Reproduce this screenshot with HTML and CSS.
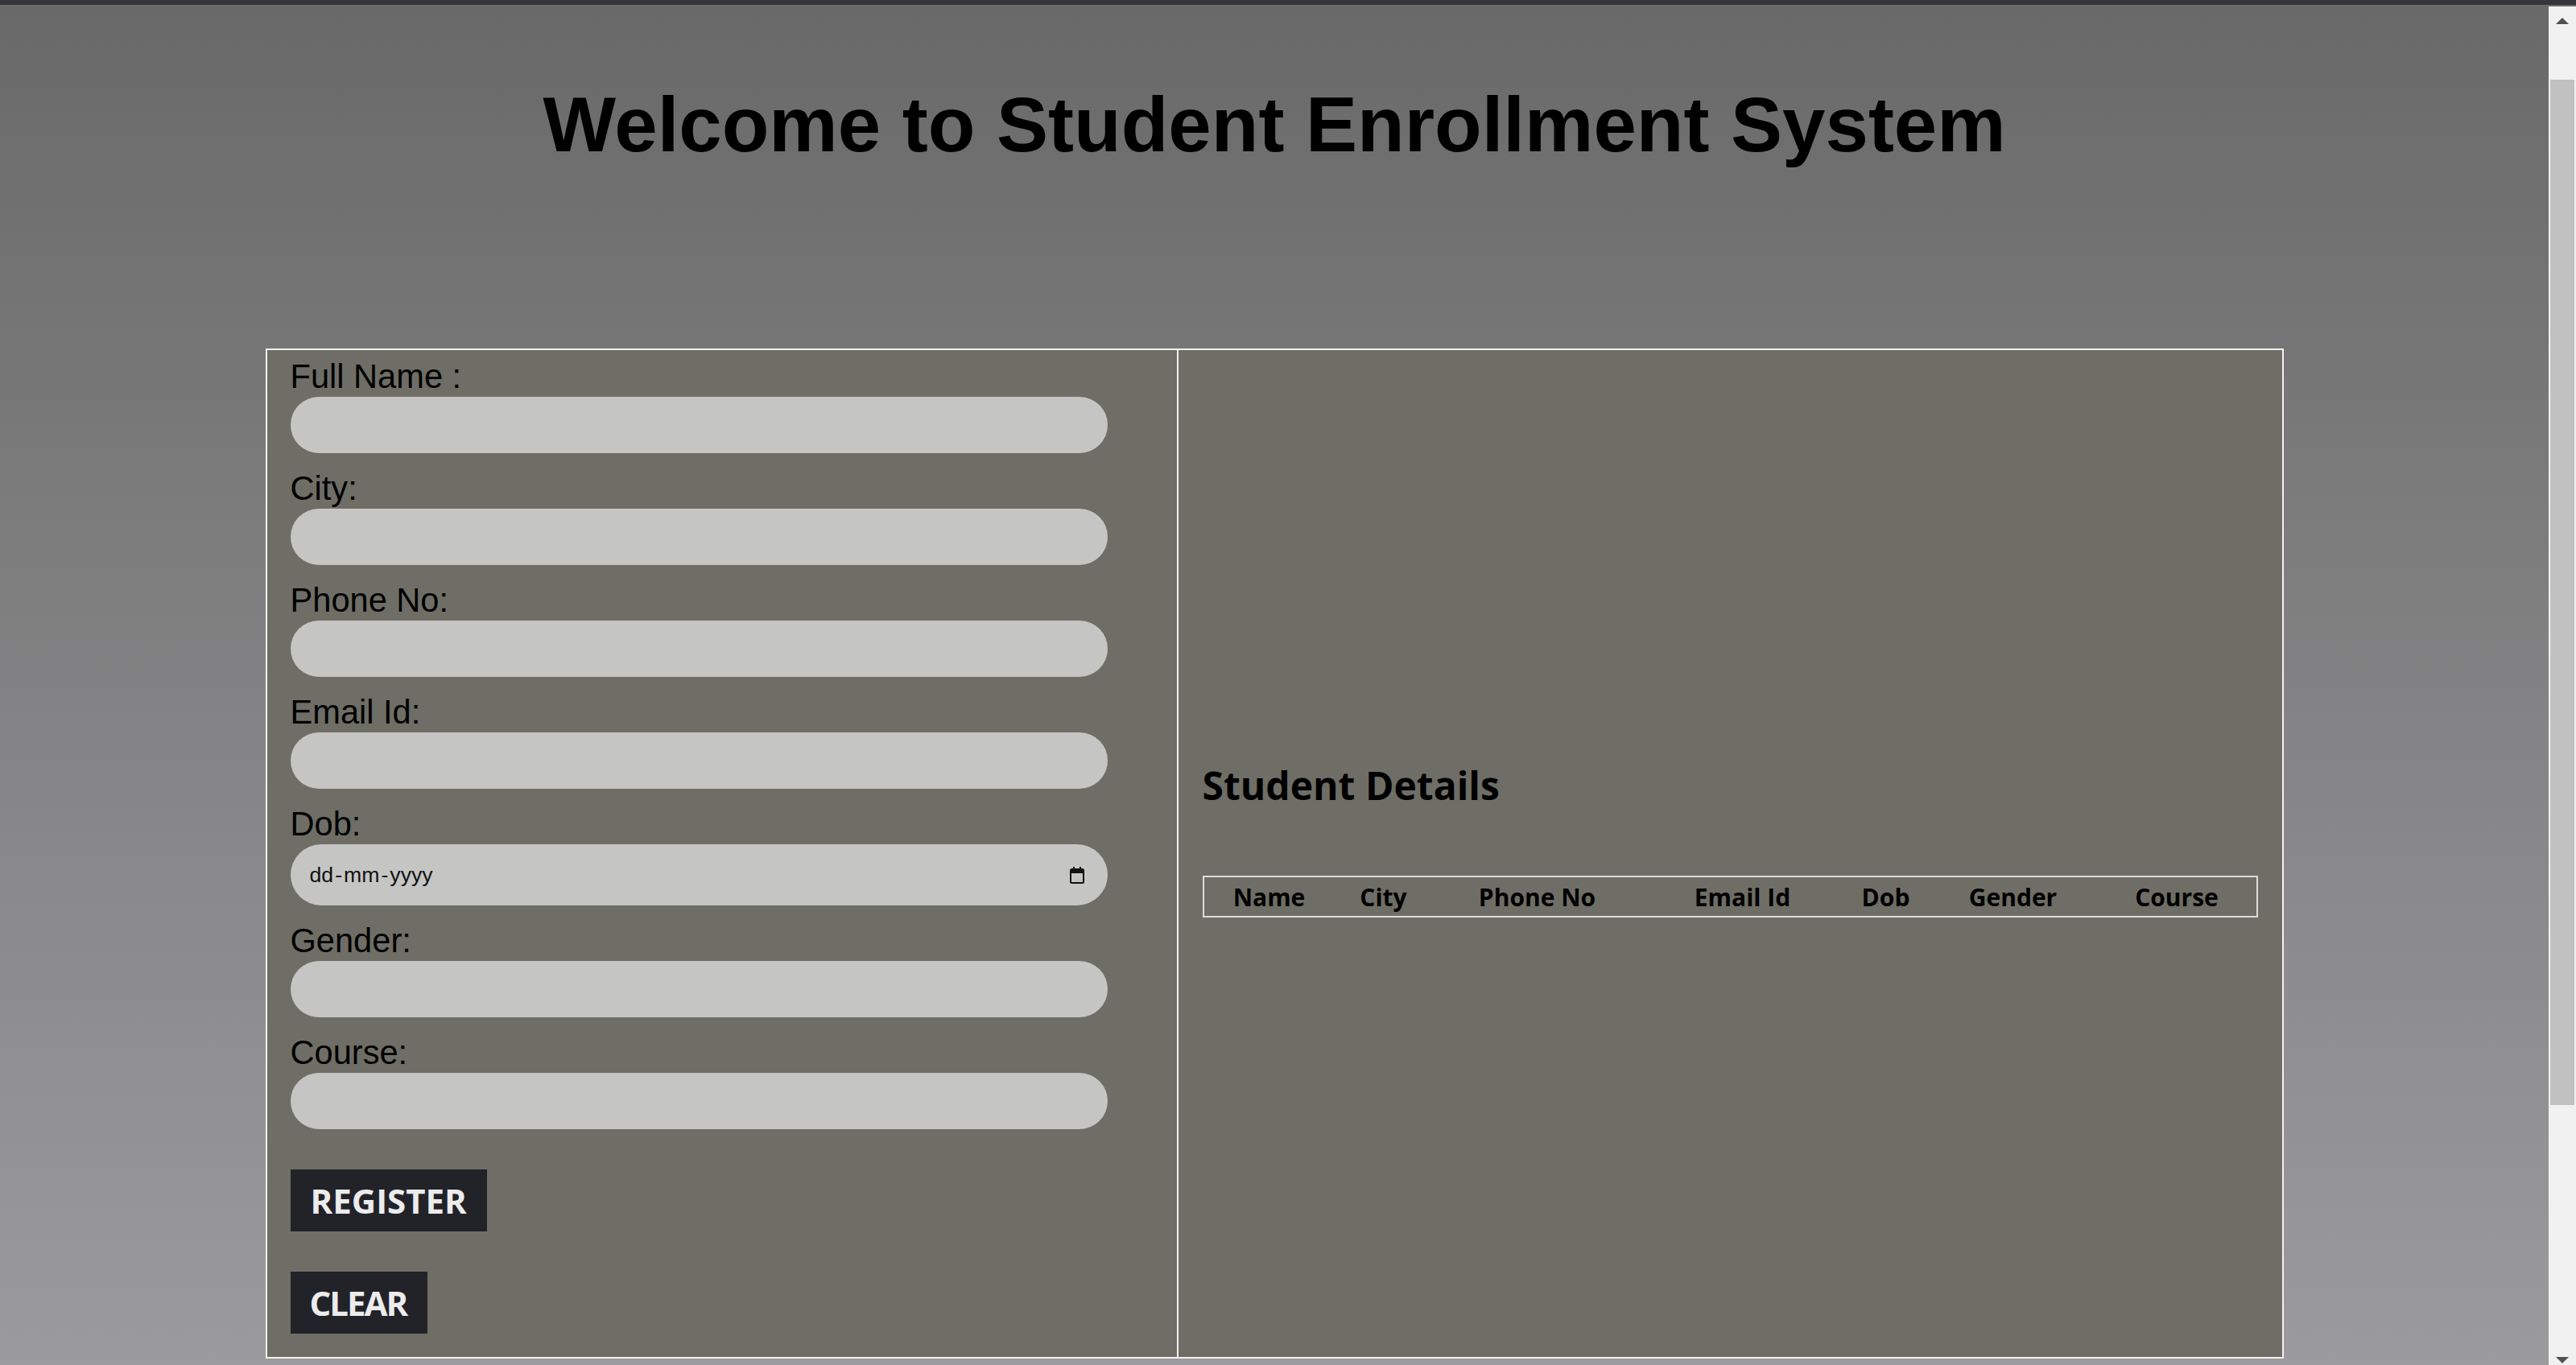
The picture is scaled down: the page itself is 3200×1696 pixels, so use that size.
FILE: index.html
```html
<!DOCTYPE html>
<html lang="en">
<head>
<meta charset="utf-8">
<title>Student Enrollment System</title>
<link rel="stylesheet" href="styles.css">
</head>
<body>
<div class="topbar"></div>
<div class="window">
  <main class="page">
    <h1 class="title">Welcome to Student Enrollment System</h1>
    <section class="board">
      <form class="form-panel">
        <label class="field-label">Full Name :</label>
        <input class="field" type="text">
        <label class="field-label">City:</label>
        <input class="field" type="text">
        <label class="field-label">Phone No:</label>
        <input class="field" type="text">
        <label class="field-label">Email Id:</label>
        <input class="field" type="text">
        <label class="field-label">Dob:</label>
        <div class="field date-field">
          <span class="date-text"><span>dd</span><span class="sep">-</span><span>mm</span><span class="sep">-</span><span>yyyy</span></span>
          <svg class="cal-icon" width="20" height="22" viewBox="0 0 20 22"><rect x="2" y="4" width="16" height="17" rx="1.5" fill="none" stroke="#111" stroke-width="2"/><rect x="2" y="4" width="16" height="5" fill="#111"/><rect x="5" y="1" width="2" height="4" fill="#111"/><rect x="13" y="1" width="2" height="4" fill="#111"/></svg>
        </div>
        <label class="field-label">Gender:</label>
        <input class="field" type="text">
        <label class="field-label">Course:</label>
        <input class="field" type="text">
        <button class="btn btn-register" type="button">REGISTER</button>
        <button class="btn btn-clear" type="button">CLEAR</button>
      </form>
      <div class="details-panel">
        <h2 class="details-title">Student Details</h2>
        <table class="details-table">
          <thead>
            <tr>
              <th class="c-name">Name</th>
              <th class="c-city">City</th>
              <th class="c-phone">Phone No</th>
              <th class="c-email">Email Id</th>
              <th class="c-dob">Dob</th>
              <th class="c-gender">Gender</th>
              <th class="c-course">Course</th>
            </tr>
          </thead>
        </table>
      </div>
    </section>
  </main>
  <div class="scrollbar">
    <div class="sb-arrow sb-up"></div>
    <div class="sb-track"><div class="sb-thumb"></div></div>
    <div class="sb-arrow sb-down"></div>
  </div>
</div>
</body>
</html>
```
FILE: styles.css
```css
html, body {
  margin: 0;
  padding: 0;
}
body {
  width: 3200px;
  height: 1696px;
  overflow: hidden;
  background: linear-gradient(#696969, #9b9b9e);
  font-family: "Liberation Sans", Arial, sans-serif;
}
.topbar {
  height: 6px;
  background: #35363b;
}
.window {
  display: flex;
  height: 1690px;
}
.page {
  flex: 1;
  min-width: 0;
}
.title {
  margin: 94px 0 223px;
  font-size: 96px;
  line-height: 110px;
  font-weight: bold;
  text-align: center;
  color: #000;
}
.board {
  box-sizing: border-box;
  width: 2507px;
  height: 1255px;
  margin: 0 auto;
  border: 2px solid #f2f2f0;
  display: grid;
  grid-template-columns: 1132px 1fr;
  background: #6e6e66;
}
.form-panel {
  border-right: 2px solid #f2f2f0;
  padding: 10px 29px 28px;
  display: flex;
  flex-direction: column;
  align-items: flex-start;
}
.field-label {
  font-size: 41.6px;
  line-height: 46px;
  color: #000;
}
.field {
  box-sizing: border-box;
  width: 1015px;
  height: 70px;
  margin: 2px 0 21px;
  border: none;
  border-radius: 35px;
  background: #c5c5c3;
  padding: 0 24px;
  font-size: 27px;
  outline: none;
}
.date-field {
  height: 76px;
  border-radius: 38px;
  display: flex;
  align-items: center;
  justify-content: space-between;
  padding: 0 28px 0 24px;
}
.date-text {
  font-family: "Liberation Sans", Arial, sans-serif;
  font-size: 26.67px;
  color: #111;
  display: flex;
}
.date-text .sep {
  margin: 0 2px;
}
.cal-icon {
  display: block;
}
.btn {
  margin-top: 29px;
  height: 77px;
  padding: 0 25px;
  border: none;
  background: #222229;
  color: #ececec;
  font-family: "Open Sans", sans-serif;
  font-weight: bold;
  font-size: 42px;
  line-height: 77px;
}
.btn-clear {
  margin-top: 50px;
  letter-spacing: -2px;
  padding: 0 26px 0 24px;
}
.details-panel {
  padding: 508px 30px 0 30px;
}
.details-title {
  margin: 0 0 79px;
  font-family: "Open Sans", sans-serif;
  font-weight: bold;
  font-size: 48px;
  line-height: 66px;
  color: #000;
}
.details-table {
  width: 1311px;
  border: 2px solid #dcdcd8;
  border-collapse: collapse;
  table-layout: fixed;
}
.details-table th {
  padding: 2px 0 0;
  font-family: "Open Sans", sans-serif;
  font-weight: bold;
  font-size: 30px;
  line-height: 46px;
  color: #000;
  text-align: center;
}
.c-name { width: 162px; }
.c-city { width: 122px; }
.c-phone { width: 260px; }
.c-email { width: 250px; }
.c-dob { width: 106px; }
.c-gender { width: 210px; }
.c-course { width: 197px; }
.scrollbar {
  width: 34px;
  margin-top: 2px;
  background: #f1f1f1;
  display: flex;
  flex-direction: column;
  align-items: center;
}
.sb-arrow {
  width: 0;
  height: 0;
  border-left: 8px solid transparent;
  border-right: 8px solid transparent;
}
.sb-up {
  margin-top: 14px;
  border-bottom: 8px solid #505050;
}
.sb-down {
  margin-bottom: 2px;
  border-top: 8px solid #505050;
}
.sb-track {
  flex: 1;
  width: 30px;
  padding-top: 69px;
  padding-bottom: 313px;
  display: flex;
}
.sb-thumb {
  flex: 1;
  background: #c1c1c1;
}
```
